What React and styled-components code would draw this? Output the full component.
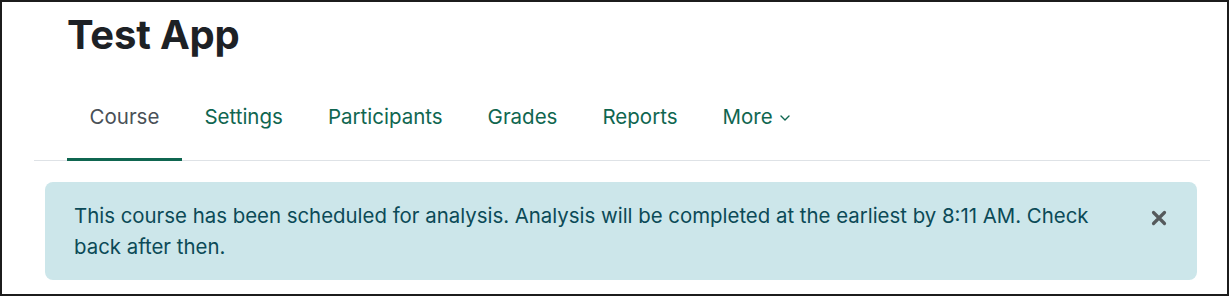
import React, { useState } from 'react'
import styled, { createGlobalStyle } from 'styled-components'

const GlobalStyle = createGlobalStyle`
  * { box-sizing: border-box; }
  body {
    margin: 0;
    background: #fff;
    font-family: Inter, "Noto Sans", sans-serif;
  }
`

const tabs = ['Course', 'Settings', 'Participants', 'Grades', 'Reports']

const App = () => {
  const [active, setActive] = useState('Course')
  const [open, setOpen] = useState(true)
  return (
    <>
      <GlobalStyle />
      <Frame>
        <Header>
          <Title>Test App</Title>
        </Header>
        <Nav>
          {tabs.map(t => (
            <Tab key={t} active={t === active} onClick={() => setActive(t)}>
              {t}
            </Tab>
          ))}
          <Tab>
            More
            <Chevron viewBox="0 0 10 6">
              <path d="M1 1l4 4 4-4" fill="none" stroke="currentColor" strokeWidth="1.4" strokeLinecap="round" strokeLinejoin="round" />
            </Chevron>
          </Tab>
        </Nav>
        {open && (
          <Alert>
            <AlertText>
              This course has been scheduled for analysis. Analysis will be completed at the earliest by 8:11 AM. Check back after then.
            </AlertText>
            <Close onClick={() => setOpen(false)} aria-label="Close">
              <svg width="16" height="16" viewBox="0 0 16 16">
                <path d="M2.5 2.5l11 11M13.5 2.5l-11 11" stroke="currentColor" strokeWidth="3.2" strokeLinecap="round" />
              </svg>
            </Close>
          </Alert>
        )}
      </Frame>
    </>
  )
}

export default App

const Frame = styled.div`
width:1229px;
height:296px;
border:2px solid #1c1c1c;
padding:0 17px 0 32px;
overflow:hidden;
`

const Header = styled.div`
padding:9px 0 0 33px;
`

const Title = styled.h1`
margin:0;
font-size:40px;
line-height:48px;
font-weight:700;
color:#1d2125;
letter-spacing:-0.2px;
`

const Nav = styled.div`
display:flex;
margin-top:28px;
padding-left:33px;
border-bottom:1px solid #dee2e6;
`

const Tab = styled.a`
display:flex;
align-items:center;
padding:15px 22.5px 26px;
margin-bottom:-1px;
font-size:20.5px;
line-height:30px;
color:${p => p.active ? '#495057' : '#0f6650'};
border-bottom:3px solid ${p => p.active ? '#0f6650' : 'transparent'};
cursor:pointer;
`

const Chevron = styled.svg`
width:10px;
height:6px;
margin-left:7px;
margin-top:2px;
`

const Alert = styled.div`
position:relative;
margin:21px 13px 0 11px;
padding:18px 90px 18px 29px;
background:#cce6ea;
border-radius:8px;
`

const AlertText = styled.p`
margin:0;
font-size:20.4px;
line-height:31px;
color:#0b4a57;
`

const Close = styled.button`
position:absolute;
top:28px;
right:30px;
padding:0;
border:0;
background:none;
color:#555a5c;
cursor:pointer;
display:flex;
`
